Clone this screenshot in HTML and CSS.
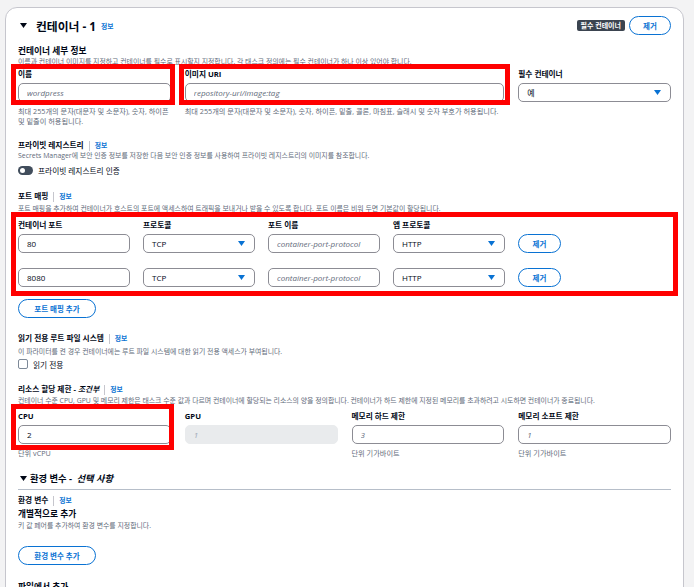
FILE: index.html
```html
<!DOCTYPE html>
<html lang="ko">
<head>
<meta charset="utf-8">
<title>컨테이너 - 1</title>
<link rel="stylesheet" href="styles.css">
</head>
<body>
<div class="card">
  <div class="head">
    <div class="title">
      <svg class="tri" width="7" height="5" viewBox="0 0 7 5"><path d="M0 0H7L3.5 5Z"/></svg>
      <h2>컨테이너 - 1</h2>
      <a class="info">정보</a>
    </div>
    <div class="actions">
      <span class="badge">필수 컨테이너</span>
      <button class="btn btn-rm">제거</button>
    </div>
  </div>

  <div class="sec-details">
    <div class="lbl-lg">컨테이너 세부 정보</div>
    <div class="desc">이름과 컨테이너 이미지를 지정하고 컨테이너를 필수로 표시할지 지정합니다. 각 태스크 정의에는 필수 컨테이너가 하나 이상 있어야 합니다.</div>
    <div class="grid4 g-details">
      <div class="col">
        <div class="hl hl-name">
          <div class="lbl">이름</div>
          <input class="inp" placeholder="wordpress">
        </div>
        <div class="hint">최대 255개의 문자(대문자 및 소문자), 숫자, 하이픈<br>및 밑줄이 허용됩니다.</div>
      </div>
      <div class="col span2">
        <div class="hl hl-uri">
          <div class="lbl">이미지 URI</div>
          <input class="inp" placeholder="repository-uri/image:tag">
        </div>
        <div class="hint">최대 255개의 문자(대문자 및 소문자), 숫자, 하이픈, 밑줄, 콜론, 마침표, 슬래시 및 숫자 부호가 허용됩니다.</div>
      </div>
      <div class="col">
        <div class="lbl">필수 컨테이너</div>
        <div class="sel"><span>예</span><svg class="caret" width="7" height="5" viewBox="0 0 7 5"><path d="M0 0H7L3.5 5Z"/></svg></div>
      </div>
    </div>
  </div>

  <div class="sec-private">
    <div class="h3">프라이빗 레지스트리<span class="sep"></span><a class="info">정보</a></div>
    <div class="desc">Secrets Manager에 보안 인증 정보를 저장한 다음 보안 인증 정보를 사용하여 프라이빗 레지스트리의 이미지를 참조합니다.</div>
    <div class="toggle-row"><span class="toggle"><span class="knob"></span></span><span class="txt">프라이빗 레지스트리 인증</span></div>
  </div>

  <div class="sec-ports">
    <div class="h3">포트 매핑<span class="sep"></span><a class="info">정보</a></div>
    <div class="desc d-ports">포트 매핑을 추가하여 컨테이너가 호스트의 포트에 액세스하여 트래픽을 보내거나 받을 수 있도록 합니다. 포트 이름은 비워 두면 기본값이 할당됩니다.</div>
    <div class="hl hl-pm">
      <div class="pm">
        <div class="lbl">컨테이너 포트</div>
        <div class="lbl">프로토콜</div>
        <div class="lbl">포트 이름</div>
        <div class="lbl">앱 프로토콜</div>
        <div></div>
      </div>
      <div class="pm pm-row">
        <input class="inp" value="80">
        <div class="sel"><span>TCP</span><svg class="caret" width="7" height="5" viewBox="0 0 7 5"><path d="M0 0H7L3.5 5Z"/></svg></div>
        <input class="inp" placeholder="container-port-protocol">
        <div class="sel"><span>HTTP</span><svg class="caret" width="7" height="5" viewBox="0 0 7 5"><path d="M0 0H7L3.5 5Z"/></svg></div>
        <button class="btn">제거</button>
      </div>
      <div class="pm pm-row pm-row2">
        <input class="inp" value="8080">
        <div class="sel"><span>TCP</span><svg class="caret" width="7" height="5" viewBox="0 0 7 5"><path d="M0 0H7L3.5 5Z"/></svg></div>
        <input class="inp" placeholder="container-port-protocol">
        <div class="sel"><span>HTTP</span><svg class="caret" width="7" height="5" viewBox="0 0 7 5"><path d="M0 0H7L3.5 5Z"/></svg></div>
        <button class="btn">제거</button>
      </div>
    </div>
    <button class="btn btn-wide btn-add">포트 매핑 추가</button>
  </div>

  <div class="sec-ro">
    <div class="h3">읽기 전용 루트 파일 시스템<span class="sep"></span><a class="info">정보</a></div>
    <div class="desc d-ro">이 파라미터를 켠 경우 컨테이너에는 루트 파일 시스템에 대한 읽기 전용 액세스가 부여됩니다.</div>
    <label class="check-row"><span class="check"></span><span class="txt">읽기 전용</span></label>
  </div>

  <div class="sec-res">
    <div class="h3">리소스 할당 제한 - <em>조건부</em><span class="sep"></span><a class="info">정보</a></div>
    <div class="desc d-res">컨테이너 수준 CPU, GPU 및 메모리 제한은 태스크 수준 값과 다르며 컨테이너에 할당되는 리소스의 양을 정의합니다. 컨테이너가 하드 제한에 지정된 메모리를 초과하려고 시도하면 컨테이너가 종료됩니다.</div>
    <div class="grid4 g-res">
      <div class="col">
        <div class="hl hl-cpu">
          <div class="lbl">CPU</div>
          <input class="inp" value="2">
        </div>
        <div class="hint">단위 vCPU</div>
      </div>
      <div class="col">
        <div class="lbl">GPU</div>
        <input class="inp inp-dis" placeholder="1" disabled>
      </div>
      <div class="col">
        <div class="lbl">메모리 하드 제한</div>
        <input class="inp" placeholder="3">
        <div class="hint">단위 기가바이트</div>
      </div>
      <div class="col">
        <div class="lbl">메모리 소프트 제한</div>
        <input class="inp" placeholder="1">
        <div class="hint">단위 기가바이트</div>
      </div>
    </div>
  </div>

  <div class="sec-env">
    <div class="env-head">
      <svg class="tri" width="7" height="5" viewBox="0 0 7 5"><path d="M0 0H7L3.5 5Z"/></svg>
      <span>환경 변수 - <em>선택 사항</em></span>
    </div>
    <div class="h3 env-h3">환경 변수<span class="sep"></span><a class="info">정보</a></div>
    <div class="lbl-lg env-add">개별적으로 추가</div>
    <div class="desc d-env">키 값 페어를 추가하여 환경 변수를 지정합니다.</div>
    <button class="btn btn-wide btn-env">환경 변수 추가</button>
    <div class="lbl-lg env-file">파일에서 추가</div>
  </div>
</div>
</body>
</html>
```

FILE: styles.css
```css
html, body {
  margin: 0;
  height: 587px;
  overflow: hidden;
}
body {
  background: #f3f3f4;
  padding: 7px 10px 0 5px;
  box-sizing: border-box;
  font-family: "Open Sans", "Noto Sans CJK KR", sans-serif;
  color: #000716;
}
.card {
  background: #fff;
  border: 1px solid #c6c6cd;
  border-radius: 12px;
  padding: 8px 12px 40px;
  min-height: 640px;
  box-sizing: border-box;
}
.head {
  display: flex;
  justify-content: space-between;
  align-items: center;
  height: 19px;
}
.title {
  display: flex;
  align-items: center;
}
.tri {
  fill: #000716;
  margin: 0 9px 0 2px;
}
h2 {
  margin: 0;
  font-size: 11.8px;
  font-weight: 700;
  line-height: 16px;
}
.info {
  color: #0972d3;
  font-size: 6.8px;
  font-weight: 700;
  text-decoration: none;
}
.title .info {
  margin-left: 5px;
}
.actions {
  display: flex;
  align-items: center;
  gap: 4px;
}
.badge {
  background: #3b4450;
  color: #fff;
  font-size: 7px;
  font-weight: 700;
  height: 11px;
  line-height: 11px;
  padding: 0 4px;
  border-radius: 2px;
}
.btn {
  height: 19px;
  border: 1.5px solid #0972d3;
  border-radius: 10px;
  background: #fff;
  color: #0972d3;
  font: 700 7.5px "Open Sans", "Noto Sans CJK KR", sans-serif;
  padding: 0;
  box-sizing: border-box;
  display: block;
}
.btn-rm { width: 42px; }
.btn-wide { width: 78px; }

.lbl {
  font-size: 7.7px;
  font-weight: 700;
  line-height: 11px;
}
.lbl-lg {
  font-size: 8.7px;
  font-weight: 700;
  line-height: 11px;
}
.desc {
  font-size: 6.9px;
  line-height: 9px;
  color: #5f6b7a;
  white-space: nowrap;
}
.hint {
  font-size: 7.2px;
  line-height: 10px;
  color: #5f6b7a;
  margin-top: 4px;
  white-space: nowrap;
}
.h3 {
  display: flex;
  align-items: center;
  font-size: 7.7px;
  font-weight: 700;
  line-height: 11px;
}
.h3 em, .env-head em {
  font-style: italic;
  margin-left: 2px;
}
.sep {
  width: 1px;
  height: 10px;
  background: #c6c6cd;
  margin: 0 5px;
}

.grid4 {
  display: grid;
  grid-template-columns: repeat(4, minmax(0, 1fr));
  column-gap: 14px;
}
.span2 { grid-column: span 2; }

.inp {
  display: block;
  width: 100%;
  box-sizing: border-box;
  height: 19px;
  margin: 3px 0 0;
  border: 1px solid #8c8c94;
  border-radius: 5px;
  padding: 0 8px;
  font: 8px "Open Sans", "Noto Sans CJK KR", sans-serif;
  color: #000716;
  background: #fff;
  outline: none;
}
.inp::placeholder {
  font-style: italic;
  color: #5f6b7a;
}
.inp-dis {
  background: #e9ebed;
  border-color: #e9ebed;
}
.inp-dis::placeholder {
  color: #9ba7b6;
}
.sel {
  display: flex;
  align-items: center;
  justify-content: space-between;
  height: 19px;
  box-sizing: border-box;
  margin-top: 3px;
  border: 1px solid #8c8c94;
  border-radius: 5px;
  padding: 0 9px 0 8px;
  font-size: 8px;
}
.caret { fill: #0972d3; }

/* highlight frames */
.hl { position: relative; }
.hl::after {
  content: "";
  position: absolute;
  border: 5px solid #ff0000;
  pointer-events: none;
}
.hl-name::after { top: -5px; left: -7px; right: -4px; bottom: -3px; }
.hl-uri::after { top: -5px; left: -6px; right: -6px; bottom: -3px; }
.hl-pm::after { top: -5px; left: -7px; right: -7px; bottom: -9px; }
.hl-cpu::after { top: -7px; left: -7px; right: -3px; bottom: -6px; }

.sec-details { margin-top: 11px; }
.g-details { margin-top: 3px; }

.sec-private { margin-top: 14px; }
.toggle-row {
  display: flex;
  align-items: center;
  gap: 5px;
  margin-top: 4px;
  height: 12px;
}
.toggle {
  width: 15px;
  height: 9px;
  border-radius: 5px;
  background: #414d5c;
  position: relative;
}
.knob {
  position: absolute;
  left: 2px;
  top: 2px;
  width: 5px;
  height: 5px;
  border-radius: 50%;
  background: #fff;
}
.txt { font-size: 7.7px; }

.sec-ports { margin-top: 15px; }
.d-ports { margin-top: 2px; }
.hl-pm { margin-top: 4px; padding-top: 3px; }
.pm {
  display: grid;
  grid-template-columns: repeat(4, 112px) 43px;
  column-gap: 13px;
  align-items: center;
}
.pm-row .inp, .pm-row .sel, .pm-row .btn { margin-top: 3px; }
.pm-row2 { margin-top: 12px; }
.btn-add { margin-top: 12px; }

.sec-ro { margin-top: 15px; }
.d-ro { margin-top: 3px; }
.check-row {
  display: flex;
  align-items: center;
  gap: 5px;
  margin-top: 3px;
  height: 10px;
}
.check {
  width: 10px;
  height: 10px;
  box-sizing: border-box;
  border: 1px solid #7d8998;
  border-radius: 2px;
}

.sec-res { margin-top: 15px; }
.d-res { margin-top: 1px; }
.g-res { margin-top: 6px; }

.sec-env { margin-top: 14px; }
.env-head {
  display: flex;
  align-items: center;
  font-size: 9.3px;
  font-weight: 700;
  line-height: 13px;
  padding-bottom: 4px;
  border-bottom: 1px solid #b6bec9;
}
.env-head .tri { margin: 0 3px 0 2px; }
.env-h3 { margin-top: 5px; }
.env-add { margin-top: 3px; }
.d-env { margin-top: 1px; }
.btn-env { margin-top: 16px; }
.env-file { margin-top: 17px; }
```
